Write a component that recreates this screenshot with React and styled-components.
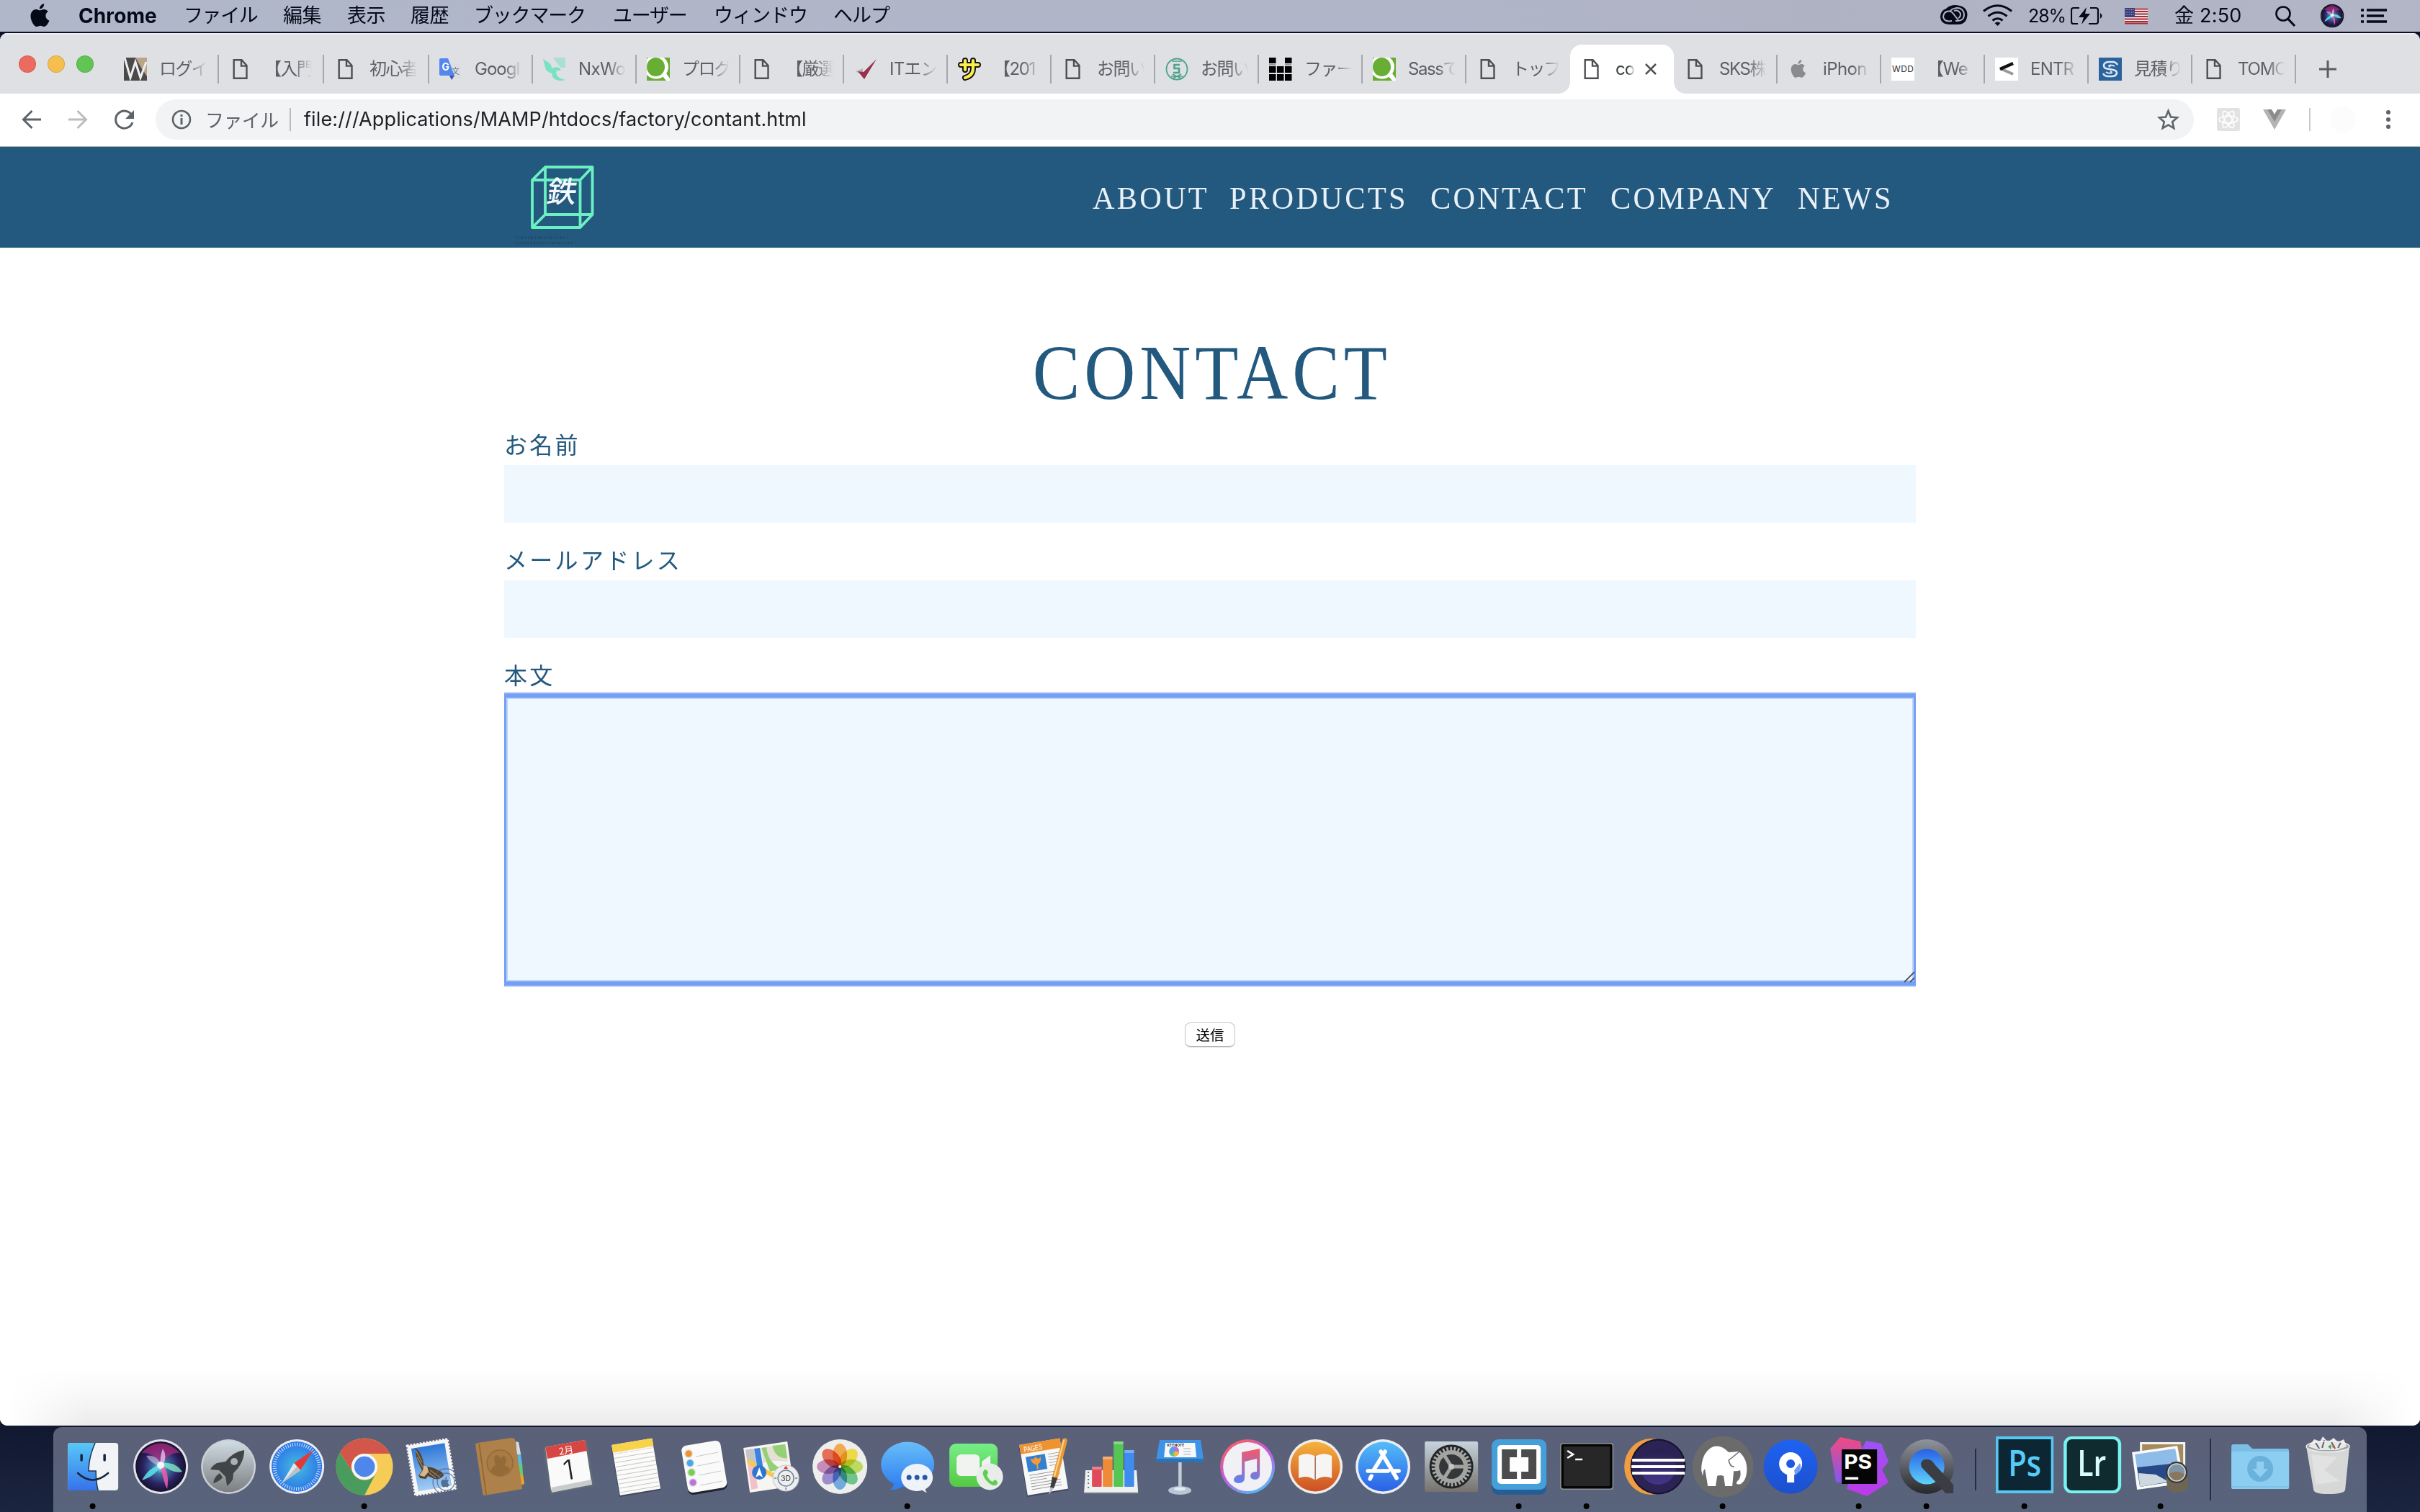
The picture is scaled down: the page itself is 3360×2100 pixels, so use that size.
import React from "react";
import styled, { createGlobalStyle } from "styled-components";

const ui = `Inter, "Noto Sans CJK JP", sans-serif`;
const serif = `"Liberation Serif", "Noto Sans CJK JP", serif`;
const navy = "#23597e";

const GlobalStyle = createGlobalStyle`
  *, *::before, *::after { box-sizing: border-box; }
  html, body, #root { margin: 0; height: 100%; }
  body { background: #141b30; overflow: hidden; }
`;

const Desktop = styled.div`
  width: 3360px;
  height: 2100px;
  display: flex;
  flex-direction: column;
  font-family: ${ui};
  background: linear-gradient(180deg, #0a1128 0, #0a1128 1960px, #111830 1980px, #1c2540 2100px);
`;

/* ---------- menu bar ---------- */

const MenuBar = styled.header`
  flex: none;
  height: 44px;
  margin-bottom: 2px;
  display: flex;
  align-items: center;
  padding-left: 39px;
  color: #050a18;
  font-size: 27px;
  line-height: 44px;
  white-space: nowrap;
  background: linear-gradient(90deg, #b0b7c9, #b0b6c8 60%, #afb2c3 75%, #b3b6c6);
`;

const MenuItem = styled.span`
  flex: none;
  width: ${(p) => p.$w}px;
  height: 44px;
  letter-spacing: ${(p) => p.$ls || 0}px;
  font-weight: ${(p) => (p.$bold ? 700 : 400)};
  font-size: ${(p) => p.$size || 27}px;
`;

const MenuGlyph = styled.svg`
  flex: none;
  display: block;
  height: 44px;
  width: ${(p) => p.$w}px;
`;

const MenuSpace = styled.div`
  flex: 1;
`;

/* ---------- browser window ---------- */

const Window = styled.main`
  flex: none;
  height: 1934px;
  display: flex;
  flex-direction: column;
  border-radius: 10px;
  overflow: hidden;
  background: #fff;
`;

const TabStrip = styled.div`
  flex: none;
  height: 84px;
  display: flex;
  align-items: flex-end;
  background: #dfe0e4;
  box-shadow: inset 0 2px 0 #eeeef1;
`;

const Lights = styled.div`
  width: 158px;
  height: 82px;
  display: flex;
  gap: 16px;
  padding-left: 26px;
  align-items: center;
`;

const Light = styled.span`
  width: 24px;
  height: 24px;
  border-radius: 50%;
  background: ${(p) => p.$c};
  border: 1px solid rgba(0, 0, 0, 0.12);
`;

const Tab = styled.div`
  position: relative;
  flex: none;
  width: ${(p) => p.$w}px;
  height: 68px;
  display: flex;
  align-items: center;
  padding: 0 0 1px 14px;
  border-radius: 16px 16px 0 0;
  background: ${(p) => (p.$active ? "#fff" : "transparent")};

  &::after {
    content: "";
    display: ${(p) => (p.$line ? "block" : "none")};
    margin-left: auto;
    width: 2px;
    height: 40px;
    background: #a5a7ab;
  }
`;

const TabFlare = styled.span`
  position: absolute;
  bottom: 0;
  width: 16px;
  height: 16px;
  ${(p) => (p.$side === "left" ? "left: -16px" : "right: -16px")};
  background: radial-gradient(circle at ${(p) => (p.$side === "left" ? "0 0" : "100% 0")}, transparent 15.5px, #fff 16px);
`;

const Favicon = styled.svg`
  flex: none;
  display: block;
  width: 32px;
  height: 32px;
`;

const TabTitle = styled.span`
  flex: none;
  margin-left: 17px;
  width: ${(p) => (p.$short ? 28 : 68)}px;
  overflow: hidden;
  white-space: nowrap;
  font-size: 24px;
  line-height: 36px;
  letter-spacing: ${(p) => p.$ls}px;
  color: ${(p) => (p.$short ? "#3c4043" : "#5c5f64")};
  mask-image: linear-gradient(90deg, #000 60%, transparent 97%);
`;

const TabClose = styled.svg`
  width: 32px;
  height: 32px;
  margin-left: -2px;
`;

const NewTab = styled.svg`
  width: 32px;
  height: 68px;
  margin-left: 28px;
`;

const Toolbar = styled.div`
  flex: none;
  height: 74px;
  display: flex;
  align-items: center;
  padding: 0 0 2px 0;
  background: #fff;
  border-bottom: 1px solid #b2b3b6;
`;

const ToolIcon = styled.svg`
  flex: none;
  display: block;
  width: ${(p) => p.$w}px;
  height: 56px;
`;

const Omnibox = styled.div`
  flex: none;
  width: 2830px;
  height: 56px;
  display: flex;
  align-items: center;
  border-radius: 28px;
  background: #f1f3f5;
  font-size: 26px;
  color: #202124;
  white-space: nowrap;
`;

const Scheme = styled.span`
  width: 102px;
  color: #5f6368;
  letter-spacing: -0.6px;
`;

const Divider = styled.span`
  flex: none;
  width: 2px;
  height: 32px;
  margin: ${(p) => p.$m || "0"};
  background: #b9bbbe;
`;

const Address = styled.span`
  flex: 1;
  font-size: 27px;
  letter-spacing: ${(p) => p.$ls}px;
`;

/* ---------- web page ---------- */

const Page = styled.div`
  position: relative;
  flex: 1;
  display: flex;
  flex-direction: column;
  background: #fff;
`;

const SiteHeader = styled.div`
  flex: none;
  height: 140px;
  display: flex;
  justify-content: center;
  background: ${navy};
`;

const HeaderInner = styled.div`
  width: 1960px;
  display: flex;
  align-items: center;
`;

const Logo = styled.svg`
  width: 140px;
  height: 140px;
`;

const Nav = styled.nav`
  margin-left: 677px;
  padding-top: 2px;
  display: flex;
`;

const NavCell = styled.div`
  flex: none;
  width: ${(p) => p.$w}px;
`;

const NavLink = styled.a`
  display: inline-block;
  transform: scaleX(0.94);
  transform-origin: left;
  font-family: ${serif};
  font-size: 45px;
  line-height: 60px;
  letter-spacing: ${(p) => p.$ls}px;
  color: #e9f1f8;
  white-space: nowrap;
`;

const Section = styled.section`
  width: 1960px;
  height: 1300px;
  margin: 0 auto;
  display: flex;
  flex-direction: column;
  align-items: center;
  overflow: hidden;
`;

const Title = styled.h1`
  margin: 114px 0 0 5px;
  height: 120px;
  font-family: ${serif};
  font-weight: 400;
  font-size: 107px;
  line-height: 120px;
  letter-spacing: 6.4px;
  color: ${navy};
  transform: scaleX(0.92);
`;

const Field = styled.label`
  align-self: stretch;
  display: flex;
  flex-direction: column;
  font-family: "Noto Sans CJK JP", sans-serif;
  font-size: 32px;
  line-height: 48px;
  letter-spacing: 3.3px;
  color: ${navy};
  margin-top: ${(p) => p.$mt}px;
`;

const TextInput = styled.input`
  margin-top: 6px;
  height: 80px;
  border: 0;
  background: #f0f8ff;
`;

const MessageBox = styled.div`
  position: relative;
  display: flex;
  margin-top: 6px;
`;

const TextArea = styled.textarea`
  flex: 1;
  height: 400px;
  border: 0;
  outline: 0;
  resize: none;
  border-radius: 1px;
  background: #f0f8ff;
  box-shadow: 0 0 0 3px #749ff4, 0 0 0 5px #c6d8fb, inset 0 0 0 3px #749ff4, inset 0 0 0 5px #bdd3f9;
`;

const Grip = styled.svg`
  position: absolute;
  right: 0;
  bottom: 0;
  width: 20px;
  height: 20px;
`;

const Submit = styled.button`
  margin: 54px 0 0;
  width: 70px;
  height: 34px;
  padding: 0 0 1px;
  border: 1.5px solid #c9c9c9;
  border-bottom-color: #b4b4b4;
  border-radius: 8px;
  background: #fff;
  box-shadow: 0 1px 1px rgba(0, 0, 0, 0.12);
  font-family: "Noto Sans CJK JP", sans-serif;
  font-size: 19.5px;
  line-height: 28px;
  color: #000;
`;

const DockShade = styled.div`
  position: absolute;
  left: 0;
  right: 0;
  bottom: 0;
  height: 80px;
  background: linear-gradient(180deg, rgba(0, 0, 0, 0), rgba(0, 0, 0, 0.028) 45%, rgba(0, 0, 0, 0.08));
  mask-image: linear-gradient(90deg, transparent 10px, #000 120px, #000 3240px, transparent 3350px);
`;

/* ---------- dock ---------- */

const Dock = styled.footer`
  flex: none;
  width: 3212px;
  height: 118px;
  margin: 2px 0 0 74px;
  padding-left: 7.8px;
  display: flex;
  border-radius: 12px 12px 0 0;
  background: linear-gradient(180deg, #5a6078, #58647c);
`;

const DockIcon = styled.svg`
  flex: none;
  display: block;
  width: 94.3px;
  height: 118px;
  overflow: visible;
`;

const DockGap = styled.div`
  flex: none;
  width: ${(p) => p.$w}px;
  padding-top: ${(p) => p.$top}px;
  display: flex;
  justify-content: center;

  &::before {
    content: "";
    width: 2px;
    height: ${(p) => p.$h}px;
    background: #252c48;
  }
`;

/* ---------- drawings ---------- */

const PageIcon = () => (
  <path d="M6.700 3.200 H17.500 L24.500 11 V28.800 H6.700 Z M17 3.500 V11.600 H24.500" fill="none" stroke="#4d4f52" strokeWidth="2.400" />
);

const applePath =
  "M24 17c0-5 4-7.300 4.200-7.500-2.300-3.400-5.900-3.800-7.100-3.900-3-.3-5.900 1.800-7.400 1.800-1.600 0-3.900-1.700-6.400-1.700C4 5.800 1 7.700-.8 10.600c-3.600 6.200-.9 15.300 2.600 20.300C3.500 33.400 5.500 36.200 8.100 36.100c2.600-.1 3.500-1.700 6.600-1.700s4 1.700 6.600 1.600c2.700 0 4.500-2.500 6.200-4.900 1.900-2.800 2.700-5.600 2.800-5.700-.1-.1-6.300-2.400-6.300-8.400zM19 2.300C20.400.6 21.300-1.700 21.100-4c-2 .1-4.400 1.300-5.800 3-1.300 1.500-2.400 3.900-2.100 6.100C15.400 5.300 17.600 4 19 2.300z";

const QiitaIcon = () => (
  <>
    <rect width="32" height="32" fill="#68ad34" />
    <ellipse cx="13" cy="13" rx="17" ry="16.500" fill="#fff" />
    <path d="M21 25 L27 32 H32 V29 L27 22Z" fill="#fff" />
    <ellipse cx="12.500" cy="13" rx="12.500" ry="13" fill="#68ad34" />
  </>
);

const favicons = {
  page: PageIcon,
  qiita: QiitaIcon,
  w: () => (
    <>
      <rect width="32" height="32" fill="#4a4a4a" />
      <path d="M16 0 H32 V26 L24 14Z" fill="#b9a58a" />
      <path d="M1 0 L9 28 L16 6 L23 28 L31 6" fill="none" stroke="#eee" strokeWidth="3" />
    </>
  ),
  translate: () => (
    <>
      <path d="M12 8 H28 Q30 8 30 10 V30 H18Z" fill="#dcdde0" />
      <path d="M2 1 H12 L21 25 H2 Q0 25 0 23 V3 Q0 1 2 1Z" fill="#5487ee" />
      <path d="M14 25 H21 L17 31Z" fill="#3a54b5" />
      <text x="3.500" y="18" fontSize="14" fontWeight="700" fill="#fff">G</text>
      <text x="17" y="23" fontSize="11" fill="#5f7a90">文</text>
    </>
  ),
  bird: () => (
    <>
      <path d="M14 0 H31 V14 H24Z" fill="#7fdccb" opacity=".55" />
      <path d="M0 2 L8 7 Q12 10 12 15 Q17 12 22 14 Q25 15 24 18 L19 18 Q15 27 31 31 Q20 34 14 28 Q12 25 13 22 Q4 20 3 14Z" fill="#78e3c0" />
    </>
  ),
  check: () => (
    <>
      <path d="M2 19 L12 15 L12 25Z" fill="#b9b3b4" />
      <path d="M31 2 L14 30 L5 19 L13 20Z" fill="#98304e" />
    </>
  ),
  sa: () => (
    <g fill="none" strokeLinecap="round" strokeLinejoin="round">
      <path d="M4 10 H28 M10 4 V17 M21 4 V15 Q21 25 10 28" stroke="#111" strokeWidth="8" />
      <path d="M4 10 H28 M10 4 V17 M21 4 V15 Q21 25 10 28" stroke="#fbee4a" strokeWidth="4.200" />
    </g>
  ),
  seal: () => (
    <g fill="none" stroke="#4ea388">
      <circle cx="16" cy="16" r="14.500" strokeWidth="1.800" />
      <path d="M20 10 H12.500 V15 H19 V21 H11" strokeWidth="2.600" />
      <path d="M9 5 H23 M8 26 H24 M10 23 L22 29 M22 23 L10 29" strokeWidth="1.500" />
    </g>
  ),
  blocks: () => (
    <g fill="#000">
      {[[0, 0], [22, 0], [0, 12], [11, 12], [22, 12], [0, 23], [11, 23], [22, 23]].map(([x, y]) => (
        <rect key={`${x}-${y}`} x={x} y={y} width="9.500" height={y ? 9 : 8} />
      ))}
      <path d="M0 9 H9 V11 H0Z M22 9 H31 V11 H22Z" fill="#999" />
    </g>
  ),
  apple: () => <path d={applePath} transform="translate(6.300 5.500) scale(.62)" fill="#8a8b8e" />,
  wdd: () => (
    <>
      <rect width="32" height="32" fill="#fff" />
      <text x="1" y="20" fontSize="12" textLength="30" fill="#333">WDD</text>
    </>
  ),
  less: () => (
    <>
      <rect width="32" height="32" fill="#fff" />
      <path d="M7 15 L25 23" stroke="#999" strokeWidth="4" />
      <path d="M25 8 L7 16" stroke="#111" strokeWidth="4.500" />
    </>
  ),
  s: () => (
    <>
      <rect width="32" height="32" fill="#2d639c" />
      <path d="M26 10 Q24 6 19 6 H13 Q7 7 7 11 Q7 15 12 15.500 L20 17 Q25 18 25 21.500 Q24 26 18 26 H13 Q8 26 6 22" fill="none" stroke="#dbe9f6" strokeWidth="2.600" />
      <path d="M22 12 Q20 10.500 16 10.500 Q12 11 16 13 M10 20 Q12 21.800 16 21.800 Q20 21 16 19" fill="none" stroke="#dbe9f6" strokeWidth="2" />
    </>
  ),
};

const tabs = [
  ["w", "ログイ", 146, -1.6],
  ["page", "【入門", 146, -1.6],
  ["page", "初心者", 146, -1.6],
  ["translate", "Googl", 144, -1],
  ["bird", "NxWo", 144, -0.6],
  ["qiita", "プログ", 144, -1.6],
  ["page", "【厳選", 144, -1.6],
  ["check", "ITエン", 144, -0.8],
  ["sa", "【201", 144, -1.4],
  ["page", "お問い", 144, -1.6],
  ["seal", "お問い", 144, -1.6],
  ["blocks", "ファー", 144, -1.6],
  ["qiita", "Sassで", 144, -1.4],
  ["page", "トップ", 144, -1.6],
  ["page", "co", 144, -1, true],
  ["page", "SKS株", 144, -1.4],
  ["apple", "iPhon", 144, -0.6],
  ["wdd", "【We", 144, -1.4],
  ["less", "ENTR", 144, -0.8],
  ["s", "見積り", 144, -1.6],
  ["page", "TOMO", 144, -1.2],
];

const SiriOrb = ({ id }) => (
  <>
    <defs>
      <radialGradient id={id} cx=".5" cy=".5" r=".5">
        <stop offset="0" stopColor="#b9f4ff" />
        <stop offset=".28" stopColor="#3f76a5" />
        <stop offset=".7" stopColor="#2b2263" />
        <stop offset="1" stopColor="#15122c" />
      </radialGradient>
    </defs>
    <circle cx="47" cy="55" r="38" fill="#e4e2ea" />
    <circle cx="47" cy="55" r="35" fill={`url(#${id})`} />
    <path d="M20 36 Q47 9 74 36 Q60 34 48 52 Q36 34 20 36Z" fill="#a82a7c" opacity=".75" />
    <path d="M27 40 Q43 38 48 54 Q34 52 27 40Z" fill="#d9b8e4" opacity=".6" />
    <path d="M46 52 Q60 58 56 86 Q52 80 46 52Z" fill="#f35ca8" opacity=".85" />
    <path d="M48 52 Q30 56 21 74 Q40 68 48 52Z" fill="#58e6ee" opacity=".85" />
    <path d="M47 50 Q68 48 77 62 Q64 66 47 50Z" fill="#7de8c9" opacity=".8" />
    <path d="M50 30 Q58 44 47 56 Q45 42 50 30Z" fill="#eed6fa" opacity=".7" />
    <circle cx="47" cy="53" r="5" fill="#fff" opacity=".85" />
  </>
);

const Gradient = ({ id, a, b }) => (
  <linearGradient id={id} x1="0" y1="0" x2="0" y2="1">
    <stop offset="0" stopColor={a} />
    <stop offset="1" stopColor={b} />
  </linearGradient>
);

const Sheet = ({ fill, children }) => (
  <g transform="translate(13 25) rotate(-9.500)">
    <rect x="-1" y="2" width="58" height="71" rx="1" fill="#2b3044" opacity=".5" />
    <rect width="57" height="71" rx="1" fill={fill} />
    {children}
  </g>
);

const dockApps = [
  ["finder", true, () => (
    <>
      <defs><Gradient id="fi" a="#58c8f7" b="#3672ea" /></defs>
      <rect x="12" y="22" width="70" height="66" rx="4" fill="#f1f3f7" />
      <path d="M16 22 H50 Q41 42 41 61 H51 Q51 76 54 88 H16 Q12 88 12 84 V26 Q12 22 16 22Z" fill="url(#fi)" />
      <path d="M50 22 Q41 42 41 61 H51 Q51 76 54 88" fill="none" stroke="#1c3552" strokeWidth="1.500" />
      <path d="M31 39 V46 M63 39 V46" stroke="#17263c" strokeWidth="3.500" strokeLinecap="round" />
      <path d="M26 64 Q46 83 68 64" fill="none" stroke="#17263c" strokeWidth="2.600" strokeLinecap="round" />
    </>
  )],
  ["siri", false, () => <SiriOrb id="sd" />],
  ["launchpad", false, () => (
    <>
      <defs><Gradient id="lp" a="#cfdce3" b="#7c7e80" /></defs>
      <circle cx="47" cy="55" r="38" fill="#c9d1d6" />
      <circle cx="47" cy="55" r="35.500" fill="url(#lp)" />
      <path d="M69 32 Q54 34 43 48 L31 50 Q24 54 22 59 L34 60 L43 69 L45 82 Q50 78 53 73 L54 64 Q69 50 69 32Z" fill="#424548" />
      <circle cx="55" cy="48" r="5" fill="#a9b2b8" />
      <path d="M35 64 L39 70 Q34 76 26 78 Q27 69 35 64Z" fill="#424548" />
    </>
  )],
  ["safari", false, () => (
    <>
      <defs><radialGradient id="sf"><stop offset="0" stopColor="#45bde0" /><stop offset="1" stopColor="#2b74e8" /></radialGradient></defs>
      <circle cx="47" cy="55" r="38" fill="#eceef1" />
      <circle cx="47" cy="55" r="35" fill="url(#sf)" />
      <circle cx="47" cy="55" r="31" fill="none" stroke="#d9ecfa" strokeWidth="5" strokeDasharray="1 2.246" />
      <path d="M70 32 L52 60 L43 50Z" fill="#e43a35" />
      <path d="M26 78 L43 50 L52 60Z" fill="#e4e7ea" />
      <path d="M26 78 L52 60 L47 55Z" fill="#b9c0c7" />
    </>
  )],
  ["chrome", true, () => (
    <>
      <circle cx="47" cy="55" r="39.500" fill="#f6cc56" />
      <path d="M12.800 35.200 A39.500 39.500 0 0 0 47 94.500 L63 64 A18 18 0 0 1 30 62Z" fill="#4a9c5e" />
      <path d="M12.800 35.200 A39.500 39.500 0 0 1 82 37 H47 A18 18 0 0 0 30 62Z" fill="#d3564a" />
      <circle cx="47" cy="55" r="18" fill="#f4f6f8" />
      <circle cx="47" cy="55" r="14.300" fill="#4e86ec" />
    </>
  )],
  ["mail", false, () => (
    <>
      <defs><Gradient id="ml" a="#2f78d8" b="#a3cdf3" /></defs>
      <g transform="translate(12 26) rotate(-9.500)">
        <rect width="57" height="70" fill="#f6f6f6" stroke="#f6f6f6" strokeWidth="3" strokeDasharray="2.500 2" />
        <rect x="5" y="5" width="47" height="60" fill="url(#ml)" />
      </g>
      <path d="M23 29 Q29 32 32 40 Q35 46 35 52 L39 55 Q50 56 55 60 Q62 62 63 67 Q58 74 50 72 L41 68 L38 72 L30 71 L28 67 L33 60 Q27 50 25 42Z" fill="#54432f" />
      <path d="M24 32 L33 49 M26 42 L34 56 M44 60 L58 70 M42 63 L52 71" stroke="#9a8566" strokeWidth="1.500" />
      <path d="M35 53 L40 55 L42 62 L36 69 L29 67 L34 60Z" fill="#d4b98c" />
      <circle cx="66" cy="76" r="18" fill="none" stroke="#4c6488" strokeWidth="1.500" opacity=".7" />
      <circle cx="66" cy="76" r="12" fill="none" stroke="#4c6488" strokeWidth="1.500" opacity=".7" />
      <path d={applePath} transform="translate(60 71) scale(.35)" fill="#40587c" opacity=".8" />
    </>
  )],
  ["contacts", false, () => (
    <>
      <path d="M68 20 L72 21 L75 38 H69Z" fill="#d7dade" /><path d="M70 38 H75 L77 52 H71Z" fill="#5ab7e0" />
      <path d="M71 52 H77 L78 66 H72Z" fill="#5fd06c" /><path d="M73 66 H78 L80 79 L74 81Z" fill="#eda32f" />
      <path d="M12 25 Q11 23 15 22 L62 15 Q66 15 67 18 L77 86 L25 95 Q22 95 22 92Z" fill="#ae804a" />
      <path d="M17 23 L27 94" stroke="#8a6234" strokeWidth="1.500" />
      <circle cx="46" cy="50" r="18" fill="#a87b44" stroke="#936a39" strokeWidth="1.500" />
      <path d="M33 61 Q35 55 40 53 Q35 40 42 39 Q47 40 46 47 Q47 39 53 41 Q57 47 52 53 Q58 55 60 59 Q47 74 33 61Z" fill="#936a38" />
    </>
  )],
  ["calendar", false, () => (
    <>
      <path d="M12 31 L17 27 L73 21 L83 82 L22 93Z" fill="#5d6c76" />
      <path d="M15 28 L70 18 L79 77 L23 88Z" fill="#fafafa" />
      <path d="M23 84 L79 73 L80 80 L24 91Z" fill="#c9cccd" />
      <path d="M15 28 L70 18 L73 33 L18 44Z" fill="#d64743" />
      <g transform="rotate(-9 45 33)" textAnchor="middle" fontFamily="Noto Sans CJK JP">
        <text x="44" y="37" fontSize="13" fill="#fff">2月</text>
        <text x="43" y="73" fontSize="38" fontWeight="300" fill="#222" fontFamily="Inter, sans-serif">1</text>
      </g>
    </>
  )],
  ["notes", false, () => (
    <Sheet fill="#fbfbf9">
      <rect width="57" height="11" fill="#f8d24d" />
      <path d="M0 13 H57" stroke="#aaa" strokeDasharray="1 1.500" />
      {[19, 25, 31, 37, 43, 49, 55, 61, 67].map((y) => <path key={y} d={`M1 ${y} H56`} stroke="#c6c6c4" />)}
    </Sheet>
  )],
  ["reminders", false, () => (
    <>
      <g transform="translate(15 27) rotate(-9.500)"><rect x="0" y="2" width="55" height="67" rx="7" fill="#20242f" /><rect width="55" height="66" rx="7" fill="#fafafa" /></g>
      {[[26, 37, "#f1922f"], [28, 50, "#4aa7ee"], [30, 63, "#76cf4c"], [32, 77, "#bd74da"]].map(([x, y, c]) => (
        <g key={y}>
          <circle cx={x} cy={y} r="6" fill="#dedede" /><circle cx={x} cy={y} r="4.500" fill={c} />
          <path d={`M${x + 10} ${y + 4} L${x + 41} ${y - 2}`} stroke="#c8c8c8" />
        </g>
      ))}
    </>
  )],
  ["maps", false, () => (
    <>
      <path d="M7 29 L68 20 L77 82 L16 91Z" fill="#f6f5f1" />
      <path d="M10 32 L19 30 L27 85 L18 87Z" fill="#f3bfc9" />
      <path d="M10 32 L22 30 L25 52 L13 50Z" fill="#c4c6c8" />
      <path d="M32 29 L65 24 L69 48 Q46 45 34 50Z" fill="#e4e0d6" />
      <path d="M47 26 L65 24 L68 43 Q52 45 47 26Z M32 29 L39 28 Q41 50 60 58 L44 62Z" fill="#96d074" />
      <path d="M12 44 L60 70 L56 75 L13 51Z" fill="#f8c94c" />
      <path d="M22 30 L30 29 L35 60 L27 61Z" fill="#3b83dc" />
      <circle cx="29" cy="63" r="10" fill="#2d75cf" /><path d="M29 56 L34 70 L29 67 L24 70Z" fill="#fff" />
      <circle cx="66" cy="71" r="18" fill="#eceeef" stroke="#c0c4c8" />
      <circle cx="66" cy="71" r="11" fill="none" stroke="#6f8597" strokeWidth="1.500" />
      <text x="66" y="75" textAnchor="middle" fontSize="10.500" fill="#333">3D</text>
      <path d="M66 54 L69 58 H63Z" fill="#d33" /><path d="M66 84 V87 M50 71 H53 M79 71 H82" stroke="#444" />
    </>
  )],
  ["photos", false, () => (
    <>
      <circle cx="47" cy="55" r="38" fill="#eeeeec" />
      <g style={{ isolation: "isolate" }}>
        {["#f29a36", "#ead52f", "#b3d64a", "#58bd7a", "#5b9edb", "#8e7cc6", "#bd7cb2", "#e4563e"].map((c, i) => (
          <ellipse key={c} cx="47" cy="39" rx="10" ry="16" fill={c} opacity=".85" transform={`rotate(${i * 45} 47 55)`} style={{ mixBlendMode: "multiply" }} />
        ))}
      </g>
      <circle cx="47" cy="55" r="2" fill="#fff" />
    </>
  )],
  ["messages", true, () => (
    <>
      <defs><Gradient id="ms" a="#68bdf8" b="#2f7ff0" /></defs>
      <ellipse cx="47" cy="52" rx="37" ry="31.500" fill="url(#ms)" />
      <path d="M28 76 Q28 85 22 87 Q36 88 42 80Z" fill="#3282f0" />
      <ellipse cx="60" cy="70" rx="22" ry="19" fill="#eef3fa" />
      <path d="M66 86 Q69 90 74 91 Q71 88 71 83Z" fill="#eef3fa" />
      <g fill="#2458a8"><circle cx="49" cy="70" r="3.500" /><circle cx="60" cy="70" r="3.500" /><circle cx="71" cy="70" r="3.500" /></g>
    </>
  )],
  ["facetime", false, () => (
    <>
      <defs><Gradient id="ft" a="#76ee86" b="#55c944" /></defs>
      <rect x="10" y="23" width="67" height="60" rx="9" fill="url(#ft)" />
      <rect x="20" y="38" width="32" height="30" rx="6" fill="#f0f3f0" /><path d="M55 48 L67 39 V66 L55 60Z" fill="#f0f3f0" />
      <circle cx="66" cy="69" r="18.500" fill="#e9ede9" />
      <path d="M58 60 Q61 57 64 63 L62 67 Q65 74 70 76 L73 73 Q79 76 76 80 Q70 84 61 74 Q54 65 58 60Z" fill="#5fcf52" />
    </>
  )],
  ["pages", false, () => (
    <>
      <Sheet fill="#f8f8f8">
        <rect width="57" height="13" fill="#ee9330" /><text x="5" y="11" fontSize="10" fill="#fff" textLength="26" lengthAdjust="spacingAndGlyphs">PAGES</text>
        <rect x="6" y="18" width="27" height="21" fill="#357fce" /><path d="M12 21 L16 23 L19 20 L23 23 L27 21 Q26 29 21 31 V37 H19 V31 Q13 29 12 21Z" fill="#f29b37" />
        {[19, 23, 27, 31, 35].map((y) => <path key={y} d={`M37 ${y} H53`} stroke="#aaa" />)}
        {[44, 48, 52, 56, 60, 64].map((y) => <path key={y} d={`M7 ${y} H${y === 52 ? 30 : 49}`} stroke="#999" />)}
      </Sheet>
      <path d="M73 17 Q77 13 80 18 L66 73 L58 72Z" fill="#e99a38" /><path d="M75 18 L61 72" stroke="#ffd593" strokeWidth="2" />
      <path d="M59 69 L66 71 L61 85 L56 84Z" fill="#3e3e40" /><path d="M56 84 L61 85 L54 94Z" fill="#bfc3c7" />
    </>
  )],
  ["numbers", false, () => (
    <>
      <path d="M11 60 H82 L84 90 H9Z" fill="#eff0f0" /><path d="M9 90 H84 V92 H9Z" fill="#b4b6b9" />
      {[[20, 55, "#e0495a"], [35, 41, "#ef8b36"], [50, 20, "#55c554"], [65, 32, "#3f8cf0"]].map(([x, y, c]) => (
        <g key={x}><rect x={x} y={y} width="13.500" height={83 - y} rx="1" fill={c} /><rect x={x} y={y} width="13.500" height="4" fill="#fff" opacity=".3" /></g>
      ))}
      {[63, 68, 73, 78, 84].map((y) => <path key={y} d={`M14 ${y} H16`} stroke="#777" strokeWidth="2" />)}
    </>
  )],
  ["keynote", false, () => (
    <>
      <rect x="45" y="49" width="4.500" height="38" fill="#c3cdd8" />
      <ellipse cx="47" cy="88" rx="16" ry="6" fill="#b9c6d4" /><ellipse cx="47" cy="86" rx="8" ry="2.500" fill="#e3ebf2" />
      <path d="M19 18 H76 L80 45 H14Z" fill="#3f93e6" /><path d="M14 44 H80 V49 H14Z" fill="#2c72b5" />
      <path d="M27 22 H68 L70 42 H25Z" fill="#f6f8fa" />
      <text x="29" y="27" fontSize="5" fontWeight="700" fill="#333">KEYNOTE</text>
      <circle cx="39" cy="34" r="7" fill="#53a3ec" /><path d="M39 34 V27 A7 7 0 0 1 46 34Z" fill="#c06fd4" /><path d="M39 34 H46 A7 7 0 0 1 39 41Z" fill="#eeb93c" /><path d="M39 34 V41 A7 7 0 0 1 34 39Z" fill="#74c854" />
      <path d="M52 30 H62 M52 34 H62 M52 38 H62" stroke="#a9b0b8" />
    </>
  )],
  ["itunes", false, () => (
    <>
      <defs>
        <linearGradient id="it" x1=".2" y1="0" x2=".8" y2="1"><stop offset="0" stopColor="#fb5f56" /><stop offset=".45" stopColor="#c657e0" /><stop offset="1" stopColor="#49c5f8" /></linearGradient>
        <Gradient id="in" a="#f8566c" b="#5a83f5" />
      </defs>
      <circle cx="47" cy="55" r="38" fill="url(#it)" /><circle cx="47" cy="55" r="34" fill="#f1f1f5" />
      <path d="M39 35 L64 30 V66 Q64 73 57 73 Q50 72 51 67 Q52 62 60 62 V44 L43 48 V70 Q43 78 34 78 Q27 77 28 72 Q30 66 39 66Z" fill="url(#in)" />
    </>
  )],
  ["books", false, () => (
    <>
      <defs><Gradient id="bk" a="#f6b23c" b="#cd4f24" /></defs>
      <circle cx="47" cy="55" r="38" fill="#efece9" /><circle cx="47" cy="55" r="34.500" fill="url(#bk)" />
      <path d="M47 41 Q36 34 24 40 V71 Q36 66 47 74 Q58 66 70 71 V40 Q58 34 47 41Z" fill="#f7f5f3" /><path d="M47 41 V74" stroke="#a5684a" strokeWidth="1.500" />
    </>
  )],
  ["appstore", false, () => (
    <>
      <defs><Gradient id="as" a="#54bdf8" b="#2960e8" /></defs>
      <circle cx="47" cy="55" r="38" fill="#eceef0" /><circle cx="47" cy="55" r="34.500" fill="url(#as)" />
      <path d="M50 34 L34 60 M44 34 L66 71 M26 61 H54 M62 61 H69 M31 68 L29 72" stroke="#fff" strokeWidth="5.500" strokeLinecap="round" />
    </>
  )],
  ["prefs", false, () => (
    <>
      <defs><Gradient id="sp" a="#c6d4dc" b="#76726e" /></defs>
      <rect x="10" y="20" width="74" height="70" rx="2" fill="url(#sp)" /><circle cx="47" cy="55" r="30.500" fill="#232628" />
      <circle cx="47" cy="55" r="25" fill="none" stroke="#a7a7a5" strokeWidth="5" strokeDasharray="2.800 2.436" />
      <circle cx="47" cy="55" r="20" fill="#33373a" stroke="#a3a3a1" strokeWidth="6" />
      <path d="M47 55 H66 M47 55 L37 39 M47 55 L37 71" stroke="#a3a3a1" strokeWidth="5" /><circle cx="47" cy="55" r="4" fill="#c3c3c3" />
    </>
  )],
  ["brackets", true, () => (
    <>
      <rect x="9" y="17" width="76" height="77" rx="9" fill="#265d94" /><rect x="9" y="17" width="76" height="70" rx="9" fill="#45a0da" />
      <rect x="17" y="25" width="60" height="54" rx="5" fill="#fff" />
      <path d="M23 31 H44 V42 H34 V62 H44 V72 H23Z M71 31 H50 V42 H60 V62 H50 V72 H71Z" fill="#4c4c4d" />
    </>
  )],
  ["terminal", true, () => (
    <>
      <rect x="10" y="22" width="74" height="65" rx="4" fill="#8f9599" /><rect x="11.500" y="23.500" width="71" height="62" rx="3" fill="#050505" /><rect x="15" y="27" width="64" height="55" fill="#272727" />
      <path d="M20 33 L28 38 L20 43 M31 45 H41" fill="none" stroke="#fff" strokeWidth="2.600" />
    </>
  )],
  ["eclipse", false, () => (
    <>
      <defs><Gradient id="ec" a="#28204d" b="#45358a" /></defs>
      <ellipse cx="41" cy="55" rx="37" ry="39" fill="#ef9c42" /><circle cx="51" cy="55" r="38.500" fill="#14112a" /><circle cx="51" cy="55" r="36.500" fill="#2b2354" />
      <circle cx="51" cy="55" r="25" fill="url(#ec)" />
      <path d="M15 46 H88 M14 55 H88 M15 64 H88" stroke="#fff" strokeWidth="4" />
    </>
  )],
  ["mamp", true, () => (
    <>
      <circle cx="47" cy="55" r="42.500" fill="#6b6b6b" />
      <path d="M17 60 Q17 38 30 29 Q42 22 55 35 L69 34 Q82 45 80 63 Q79 74 72 79 Q63 81 67 75 Q73 71 71 60 Q66 62 62 61 L60 82 H50 L48 68 Q43 66 39 68 L37 82 H26 L22 58 L20 61 L19 68Z" fill="#fff" />
      <path d="M70 34 Q58 44 55 46 Q57 56 63 55" fill="none" stroke="#6b6b6b" strokeWidth="1.500" />
    </>
  )],
  ["sourcetree", false, () => (
    <>
      <defs><Gradient id="st" a="#1f62f2" b="#1c50cd" /></defs>
      <circle cx="47" cy="55" r="37.500" fill="url(#st)" /><circle cx="47" cy="51" r="11" fill="none" stroke="#fff" strokeWidth="10" />
      <path d="M52 60 L60 50 Q64 60 53 67Z" fill="#6f9cf5" /><rect x="42" y="62" width="10" height="15" fill="#fff" />
    </>
  )],
  ["phpstorm", true, () => (
    <>
      <defs><Gradient id="pl" a="#f24a7e" b="#8357f0" /><Gradient id="pr" a="#9a55f4" b="#bd3ae8" /></defs>
      <path d="M21 14 L49 20 L54 45 L40 77 H15 L7 30Z" fill="url(#pl)" />
      <path d="M57 19 L78 23 L88 48 L79 59 L88 77 L58 96 L30 86 L40 50Z" fill="url(#pr)" />
      <rect x="23" y="31" width="49" height="48" fill="#050505" />
      <text x="26" y="58" fontSize="27" fontWeight="700" textLength="39" lengthAdjust="spacingAndGlyphs" fill="#fff">PS</text><rect x="28" y="69.500" width="18" height="3.500" fill="#fff" />
    </>
  )],
  ["quicktime", true, () => (
    <>
      <defs><Gradient id="qo" a="#8f939c" b="#26282b" /><Gradient id="qi" a="#2860e6" b="#5ed2fb" /></defs>
      <circle cx="47" cy="55" r="38" fill="url(#qo)" /><circle cx="47" cy="55" r="24.500" fill="url(#qi)" />
      <path d="M42 46 Q52 42 58 52 L84 80 V92 H73 L65 82 L40 56 Q37 49 42 46Z" fill="#3b3d42" />
    </>
  )],
];

const workApps = [
  ["ps", true, () => (
    <>
      <rect x="7" y="13" width="80" height="79" fill="#57c8f3" /><rect x="10.500" y="17" width="73" height="71" fill="#0c2633" />
      <text x="24" y="68" fontSize="50" fontFamily="Open Sans" fontWeight="600" textLength="46" lengthAdjust="spacingAndGlyphs" fill="#57cbf7">Ps</text>
    </>
  )],
  ["lr", false, () => (
    <>
      <rect x="7" y="13" width="80" height="79" rx="11" fill="#79f2f2" /><rect x="11.500" y="17" width="71" height="71" rx="7" fill="#102b30" />
      <text x="26" y="68" fontSize="50" fontFamily="Open Sans" fontWeight="600" textLength="40" lengthAdjust="spacingAndGlyphs" fill="#d8fbfb">Lr</text>
    </>
  )],
  ["preview", true, () => (
    <>
      <path d="M18 21 H81 V70 H18Z" fill="#f4f4f2" /><path d="M21 24 H78 V68 H21Z" fill="#a58a5c" />
      <path d="M7 35 L70 26 L80 78 L14 87Z" fill="#fafafa" /><path d="M11 38 L67 30 L75 74 L18 83Z" fill="#8fbbe8" />
      <path d="M14 56 L71 50 L75 74 L18 83Z" fill="#274a86" /><path d="M16 64 L40 66 L58 76 L18 83Z" fill="#cdd9df" />
      <path d="M54 66 L85 66 V84 Q80 91 68 91 Q58 90 56 84Z" fill="#6f6553" />
      <circle cx="69" cy="63" r="15" fill="#34373a" /><circle cx="69" cy="63" r="12" fill="#7e95a8" stroke="#dadde0" strokeWidth="1.500" />
      <path d="M58 66 Q68 58 80 66 Q74 76 66 74Z" fill="#8a765a" />
    </>
  )],
];

const placeApps = [
  ["downloads", false, () => (
    <>
      <path d="M7 27 Q7 24 10 24 H30 L36 30 H84 Q87 30 87 33 V83 Q87 86 84 86 H10 Q7 86 7 83Z" fill="#7bbfe6" />
      <rect x="7" y="34" width="80" height="52" rx="2" fill="#8ccdf2" /><path d="M7 83 H87" stroke="#73b4dc" />
      <circle cx="47" cy="58" r="18" fill="#6ab1dc" /><path d="M42 48 H52 V58 H58 L47 70 L36 58 H42Z" fill="#91cff2" />
    </>
  )],
  ["trash", false, () => (
    <>
      <path d="M17 27 L77 27 L71 87 Q70 93 47 93 Q28 93 27 87Z" fill="#d6d7d7" />
      <path d="M24 38 L60 42 L42 60 L64 75 L30 80Z" fill="#e5e5e5" opacity=".8" />
      <ellipse cx="47" cy="27" rx="30" ry="7.500" fill="#9fa1a3" />
      <path d="M20 27 L28 17 L36 20 L40 13 L47 21 L55 15 L61 21 L69 17 L73 27 L60 32 L34 32Z" fill="#e7e8e8" />
      <path d="M30 22 L35 30 M42 18 L39 29 M52 21 L57 30 M65 21 L61 29" stroke="#606568" strokeWidth="2" />
      <path d="M47 27 L52 24 L51 31Z" fill="#4aa063" /><circle cx="55" cy="27" r="2" fill="#c9643a" />
      <ellipse cx="47" cy="27" rx="30" ry="7.500" fill="none" stroke="#f2f2f2" strokeWidth="1.500" />
    </>
  )],
];

const DockGroup = ({ apps }) =>
  apps.map(([name, running, Art]) => (
    <DockIcon key={name} viewBox="0 0 94 118" preserveAspectRatio="xMidYMin meet">
      <Art />
      {running && <circle cx="46.500" cy="110" r="4" fill="#000" />}
    </DockIcon>
  ));

const MenuStatus = () => (
  <>
    <MenuGlyph $w={40} viewBox="0 0 40 44">
      <path d="M13 34 Q1 33 1 23 Q1 15 9 12 Q14 7 22 7 Q38 8 38.500 20 Q38 34 25 34Z" fill="#050a18" />
      <path d="M17 29 Q6 31 5 23 Q6 15 14 15.500 Q17 16 19 19 L26 28 M22 29 Q34 30 34 20 Q33 11 24 11 Q17 12 15 15 M20 15 Q26 13 29 19 Q29 24 26 25" fill="none" stroke="#b1b4c5" strokeWidth="2" />
    </MenuGlyph>
    <MenuGlyph $w={83} viewBox="0 0 83 44">
      <g fill="none" stroke="#050a18" strokeWidth="3" transform="translate(19.500 0)">
        <path d="M1.500 15.500 Q21 0 40.500 15.500" /><path d="M8 22.500 Q21 12 34 22.500" /><path d="M14 28.500 Q21 23 28 28.500" />
        <path d="M17 32 Q21 29 25 32 L21 36Z" fill="#050a18" stroke="none" />
      </g>
    </MenuGlyph>
    <MenuItem $w={59} $size={25} $ls={-1.1}>28%</MenuItem>
    <MenuGlyph $w={75} viewBox="0 0 75 44">
      <path d="M12 11 H4 Q1 11 1 14 V30 Q1 33 4 33 H10 M27 11 H35 Q38 11 38 14 V30 Q38 33 35 33 H25" fill="none" stroke="#050a18" strokeWidth="2.200" />
      <path d="M41 18 Q46 22 41 26Z M22 10 L11 24 H18 L15 34 L27 19 H20Z" fill="#050a18" />
    </MenuGlyph>
    <MenuGlyph $w={69} viewBox="0 0 69 44">
      <rect x="0" y="11" width="32" height="22" fill="#eceaf0" />
      <path d="M0 12.500 H32 M0 16 H32 M0 19.500 H32 M0 23 H32 M0 26.500 H32 M0 30 H32 M0 32.500 H32" stroke="#a82b33" strokeWidth="1.900" />
      <rect x="0" y="11" width="14" height="13" fill="#3d427c" />
      <path d="M1.500 13.500 H13 M1.500 17 H13 M1.500 20.500 H13" stroke="#b9bcd8" strokeDasharray="1 1.500" />
    </MenuGlyph>
    <MenuItem $w={139} $ls={0.2}>金 2:50</MenuItem>
    <MenuGlyph $w={64} viewBox="0 0 64 44">
      <circle cx="12" cy="19" r="9.500" fill="none" stroke="#050a18" strokeWidth="2.600" /><path d="M18.500 26 L28 36" stroke="#050a18" strokeWidth="3.200" />
    </MenuGlyph>
    <MenuGlyph $w={56} viewBox="0 0 56 44">
      <g transform="translate(-3.800 -1.200) scale(.422)"><SiriOrb id="sm" /><circle cx="47" cy="55" r="36.500" fill="none" stroke="#14101f" strokeWidth="4" /></g>
    </MenuGlyph>
    <MenuGlyph $w={82} viewBox="0 0 82 44">
      <path d="M0 14 H4 M0 22 H4 M0 30 H4 M8 14 H36 M8 22 H32 M8 30 H36" stroke="#050a18" strokeWidth="3.400" />
    </MenuGlyph>
  </>
);

const menus = [
  ["Chrome", 146, 0.1, true, 28],
  ["ファイル", 138, -1.4],
  ["編集", 89, -0.5],
  ["表示", 88, -0.5],
  ["履歴", 88, -0.5],
  ["ブックマーク", 193, -1.2],
  ["ユーザー", 140, -1.2],
  ["ウィンドウ", 166, -1],
  ["ヘルプ", 100, -1],
];

const links = [
  ["ABOUT", 190, 3.4],
  ["PRODUCTS", 279, 3.6],
  ["CONTACT", 250, 3.4],
  ["COMPANY", 260, 3.4],
  ["NEWS", 130, 3.4],
];

export default function App() {
  return (
    <Desktop>
      <GlobalStyle />
      <MenuBar>
        <MenuGlyph $w={70} viewBox="0 0 70 44">
          <path d={applePath} transform="translate(5.500 8.500) scale(.79)" fill="#050a18" />
        </MenuGlyph>
        {menus.map(([label, w, ls, bold, size]) => (
          <MenuItem key={label} $w={w} $ls={ls} $bold={bold} $size={size}>{label}</MenuItem>
        ))}
        <MenuSpace />
        <MenuStatus />
      </MenuBar>

      <Window>
        <TabStrip>
          <Lights>
            <Light $c="#ec6a5e" />
            <Light $c="#f5bf4f" />
            <Light $c="#61c554" />
          </Lights>
          {tabs.map(([icon, title, w, ls, active], i) => {
            const Icon = favicons[icon];
            return (
              <Tab key={i} $w={w} $active={active} $line={!active && !(tabs[i + 1] && tabs[i + 1][4])}>
                {active && <TabFlare $side="left" />}
                {active && <TabFlare $side="right" />}
                <Favicon viewBox="0 0 32 32"><Icon /></Favicon>
                <TabTitle $short={active} $ls={ls}>{title}</TabTitle>
                {active && (
                  <TabClose viewBox="0 0 32 32">
                    <path d="M16 9 L30 23 M30 9 L16 23" stroke="#4d5054" strokeWidth="2.600" />
                  </TabClose>
                )}
              </Tab>
            );
          })}
          <NewTab viewBox="0 0 32 68"><path d="M16 22 V46 M4 34 H28" stroke="#5a5d61" strokeWidth="3" /></NewTab>
        </TabStrip>

        <Toolbar>
          <ToolIcon $w={216} viewBox="0 0 216 56" fill="none" strokeWidth="3">
            <path d="M57 28 H33 M44.500 16 L32.500 28 L44.500 40" stroke="#5f6368" />
            <path d="M95 28 H119 M107.500 16 L119.500 28 L107.500 40" stroke="#babcbe" />
            <path d="M183 22 A12 12 0 1 0 184 32" stroke="#5f6368" />
            <path d="M186 15 V27 H174Z" fill="#5f6368" />
          </ToolIcon>
          <Omnibox>
            <ToolIcon $w={69} viewBox="0 0 69 56">
              <circle cx="36" cy="28" r="12" fill="none" stroke="#5f6368" strokeWidth="2.600" />
              <path d="M36 26 V35 M36 21 V24" stroke="#5f6368" strokeWidth="3" />
            </ToolIcon>
            <Scheme>ファイル</Scheme>
            <Divider $m="0 18px 0 15px" />
            <Address $ls={0.12}>file:///Applications/MAMP/htdocs/factory/contant.html</Address>
            <ToolIcon $w={66} viewBox="0 0 66 56">
              <path d="M30.500 16 L34 24.500 L43 25.300 L36.200 31.300 L38.300 40 L30.500 35.400 L22.700 40 L24.800 31.300 L18 25.300 L27 24.500Z" fill="none" stroke="#5f6368" strokeWidth="2.600" />
            </ToolIcon>
          </Omnibox>
          <ToolIcon $w={314} viewBox="0 0 314 56">
            <rect x="32" y="12" width="32" height="32" rx="3" fill="#e2e2e2" />
            <g fill="none" stroke="#fff" strokeWidth="1.600">
              <ellipse cx="48" cy="28" rx="13" ry="5" /><ellipse cx="48" cy="28" rx="13" ry="5" transform="rotate(60 48 28)" /><ellipse cx="48" cy="28" rx="13" ry="5" transform="rotate(120 48 28)" />
            </g>
            <path d="M96 14 H108 L112 21 L116 14 H128 L112 42Z" fill="#b3b3b3" /><path d="M102 14 H108 L112 21 L116 14 H122 L112 31Z" fill="#8b8b8b" />
            <path d="M161 12 V44" stroke="#c9cacc" strokeWidth="2" />
            <circle cx="207" cy="28" r="18" fill="#fcfcfc" />
            <g fill="#5f6368"><circle cx="270" cy="18" r="3" /><circle cx="270" cy="28" r="3" /><circle cx="270" cy="38" r="3" /></g>
          </ToolIcon>
        </Toolbar>

        <Page>
          <SiteHeader>
            <HeaderInner>
              <Logo viewBox="0 0 140 140">
                <g fill="none" stroke="#6cf0c3" strokeWidth="3.800" strokeLinejoin="round">
                  <path d="M39 46 H105.500 V112 H39Z M57 28 H122.500 V94 H57Z M39 46 L57 28 M105.500 46 L122.500 28 M39 112 L57 94 M105.500 112 L122.500 94" />
                </g>
                <text x="60" y="77" fontSize="41" fontWeight="500" fill="#f3f8fb" transform="translate(11 0) skewX(-10)" fontFamily="Noto Sans CJK JP">鉄</text>
                <g stroke="#16324e" strokeWidth="3" opacity=".38">
                  <path d="M15 126 H88" strokeDasharray="2 2.500 1.500 2 3 2.500" /><path d="M15 133.500 H98" strokeDasharray="2 2.500 1.500 2 2.500 2.500" />
                </g>
              </Logo>
              <Nav>
                {links.map(([label, w, ls]) => (
                  <NavCell key={label} $w={w}><NavLink $ls={ls}>{label}</NavLink></NavCell>
                ))}
              </Nav>
            </HeaderInner>
          </SiteHeader>

          <Section>
            <Title>CONTACT</Title>
            <Field $mt={14}>お名前<TextInput /></Field>
            <Field $mt={26}>メールアドレス<TextInput /></Field>
            <Field $mt={26}>
              本文
              <MessageBox>
                <TextArea />
                <Grip viewBox="0 0 20 20"><path d="M4 18 L18 4 M12 18 L18 12" stroke="#4d5560" strokeWidth="1.800" /></Grip>
              </MessageBox>
            </Field>
            <Submit>送信</Submit>
          </Section>
          <DockShade />
        </Page>
      </Window>

      <Dock>
        <DockGroup apps={dockApps} />
        <DockGap $w={42} $top={30} $h={58} />
        <DockGroup apps={workApps} />
        <DockGap $w={44} $top={16} $h={86} />
        <DockGroup apps={placeApps} />
      </Dock>
    </Desktop>
  );
}
